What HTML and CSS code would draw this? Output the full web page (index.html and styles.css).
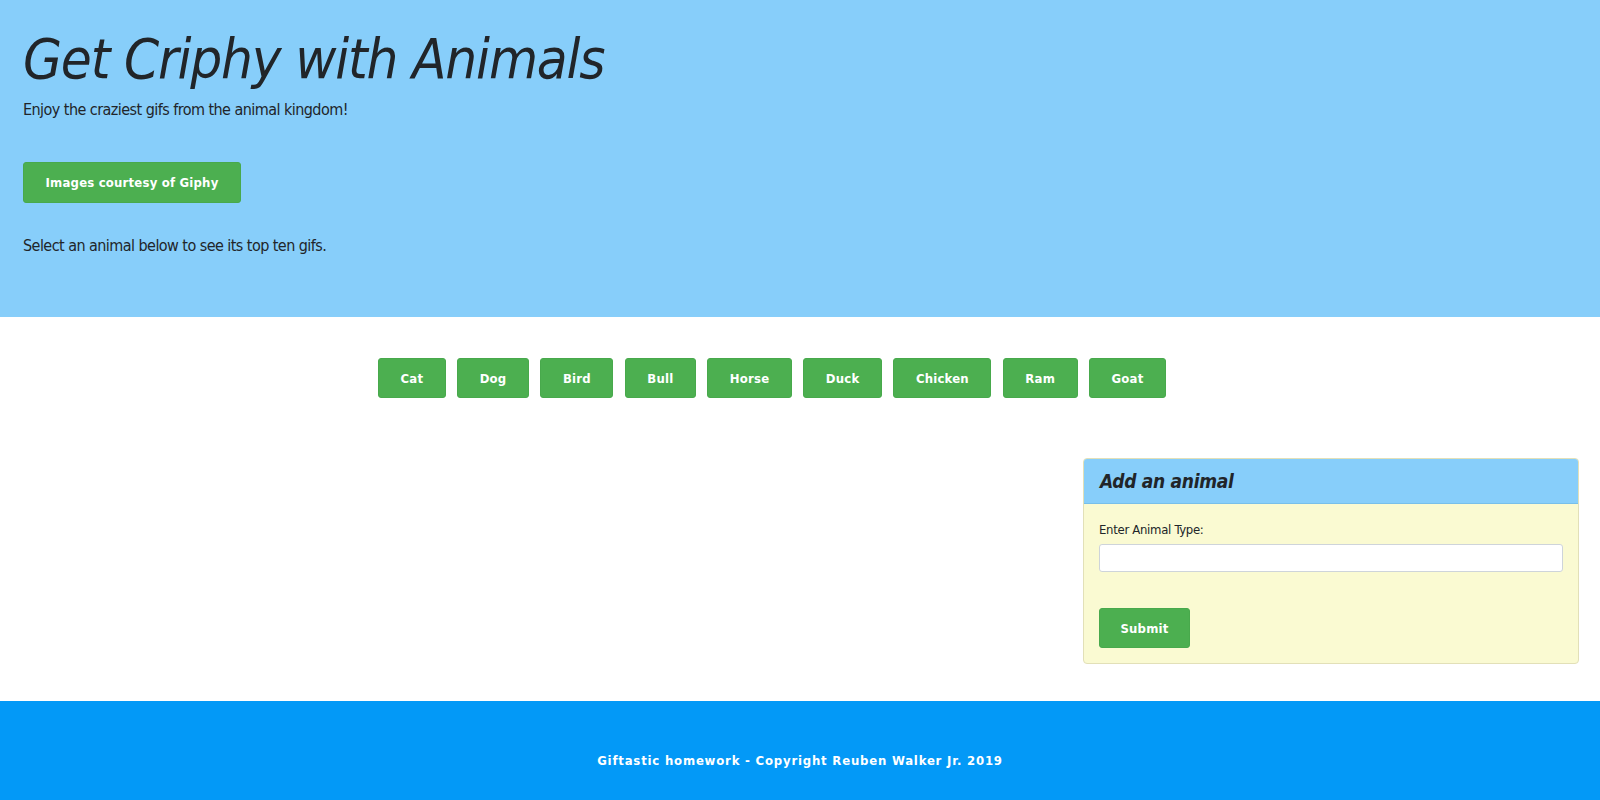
FILE: index.html
```html
<!DOCTYPE html>
<html lang="en">
<head>
<meta charset="utf-8">
<title>Get Criphy with Animals</title>
<link rel="stylesheet" href="styles.css">
</head>
<body>
<header class="hero">
  <h1 class="hero-title">Get Criphy with Animals</h1>
  <p class="hero-lead">Enjoy the craziest gifs from the animal kingdom!</p>
  <a class="btn btn-giphy" href="#">Images courtesy of Giphy</a>
  <p class="hero-note">Select an animal below to see its top ten gifs.</p>
</header>

<main class="content">
  <div class="animal-buttons">
    <button class="btn">Cat</button>
    <button class="btn">Dog</button>
    <button class="btn">Bird</button>
    <button class="btn">Bull</button>
    <button class="btn">Horse</button>
    <button class="btn">Duck</button>
    <button class="btn">Chicken</button>
    <button class="btn">Ram</button>
    <button class="btn">Goat</button>
  </div>

  <section class="panel">
    <div class="panel-heading">Add an animal</div>
    <form class="panel-body">
      <label class="field-label" for="animal-input">Enter Animal Type:</label>
      <input class="field-input" id="animal-input" type="text">
      <button class="btn btn-submit" type="button">Submit</button>
    </form>
  </section>
</main>

<footer class="footer">Giftastic homework - Copyright Reuben Walker Jr. 2019</footer>
</body>
</html>
```

FILE: styles.css
```css
* { box-sizing: border-box; }

body {
  margin: 0;
  font-family: "DejaVu Sans Condensed", "DejaVu Sans", sans-serif;
  color: #212529;
  background: #fff;
}

.hero {
  background: #87cefa;
  height: 317px;
  padding: 25px 23px 0;
}

.hero-title {
  margin: 0;
  font-size: 56px;
  font-weight: 300;
  font-style: italic;
  line-height: 67px;
  letter-spacing: -1.2px;
}

.hero-lead {
  margin: 6px 0 0;
  font-size: 16px;
  line-height: 24px;
  letter-spacing: -0.55px;
}

.hero-note {
  margin: 31px 0 0;
  font-size: 16px;
  line-height: 24px;
  letter-spacing: -0.55px;
}

.btn {
  display: inline-flex;
  align-items: center;
  justify-content: center;
  height: 40px;
  padding: 0 21.5px;
  border: 1px solid #48a94c;
  border-radius: 3px;
  background: #4caf50;
  color: #fff;
  font-family: inherit;
  font-size: 13px;
  font-weight: bold;
  letter-spacing: 0.2px;
  text-decoration: none;
  cursor: pointer;
}

.btn-giphy {
  margin-top: 40px;
  height: 41px;
  width: 218px;
  padding: 0;
}

.animal-buttons {
  display: flex;
  justify-content: center;
  gap: 11.5px;
  margin-top: 41px;
  padding-right: 56px;
}

.panel {
  width: 496px;
  margin: 60px 21px 0 auto;
  border: 1px solid #e2e0b8;
  border-radius: 4px;
  background: #fafad2;
  overflow: hidden;
}

.panel-heading {
  height: 45px;
  padding: 0 16px;
  background: #87cefa;
  border-bottom: 1px solid #78bfe9;
  font-size: 19px;
  font-weight: bold;
  font-style: italic;
  line-height: 44px;
  letter-spacing: -0.3px;
}

.panel-body {
  display: flex;
  flex-direction: column;
  align-items: flex-start;
  padding: 16px 15px 15px;
  margin: 0;
}

.field-label {
  font-size: 13px;
  line-height: 20px;
  letter-spacing: -0.3px;
}

.field-input {
  width: 100%;
  height: 28px;
  margin-top: 4px;
  border: 1px solid #ced4da;
  border-radius: 3px;
  background: #fff;
}

.btn-submit {
  margin-top: 36px;
  width: 91px;
  padding: 0;
}

.footer {
  margin-top: 37px;
  height: 99px;
  background: #0399f7;
  color: #fff;
  font-size: 13px;
  font-weight: bold;
  letter-spacing: 0.8px;
  text-align: center;
  line-height: 20px;
  padding-top: 50px;
}
```
